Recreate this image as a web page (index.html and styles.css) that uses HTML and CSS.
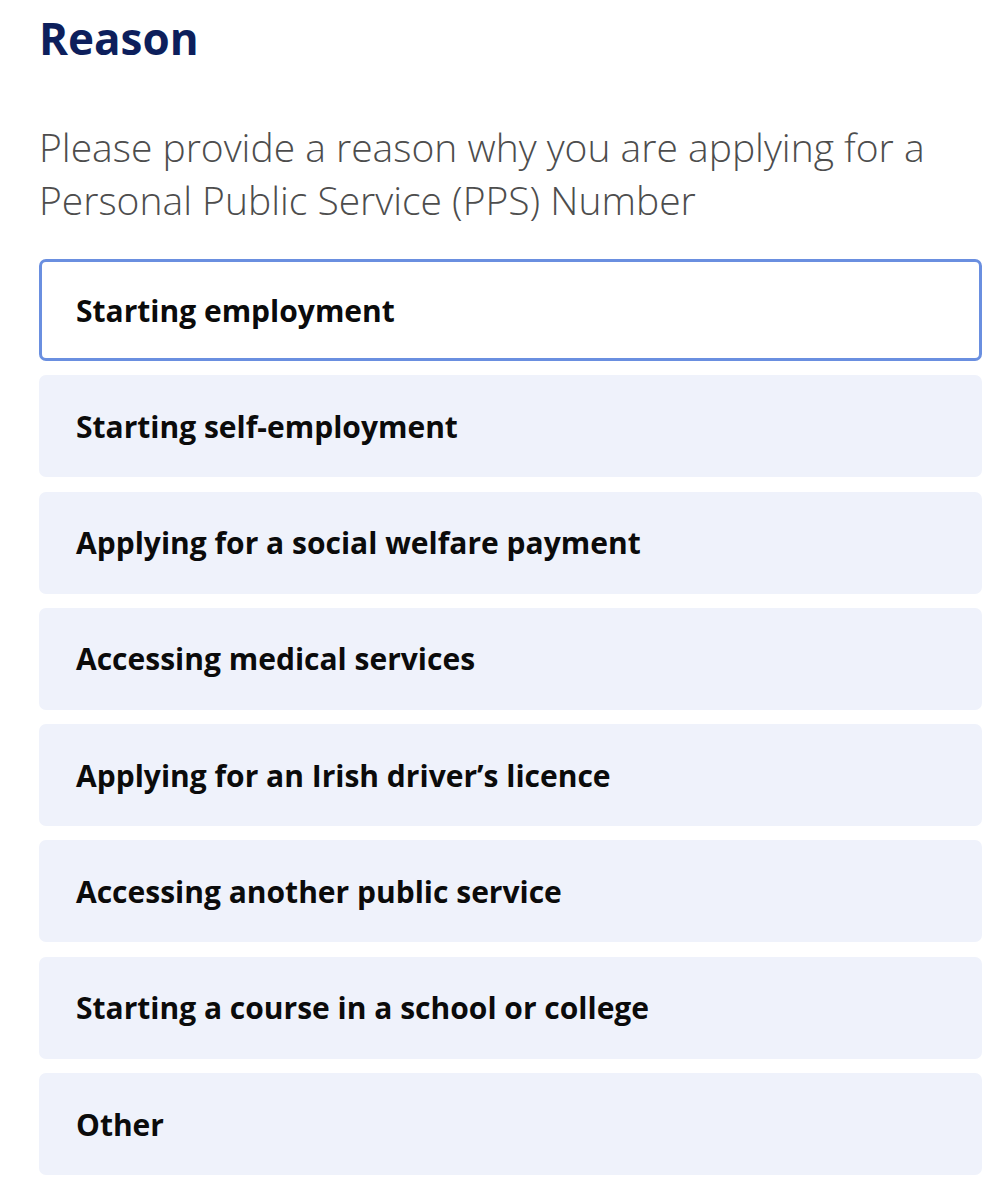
FILE: index.html
```html
<!DOCTYPE html>
<html lang="en">
<head>
<meta charset="utf-8">
<title>Reason</title>
<link rel="stylesheet" href="styles.css">
</head>
<body>
<main class="page">
  <h1 class="title">Reason</h1>
  <p class="lead">Please provide a reason why you are applying for a Personal Public Service (PPS) Number</p>
  <ul class="options">
    <li class="option option-active">Starting employment</li>
    <li class="option">Starting self-employment</li>
    <li class="option">Applying for a social welfare payment</li>
    <li class="option">Accessing medical services</li>
    <li class="option">Applying for an Irish driver’s licence</li>
    <li class="option">Accessing another public service</li>
    <li class="option">Starting a course in a school or college</li>
    <li class="option">Other</li>
  </ul>
</main>
</body>
</html>
```
FILE: styles.css
```css
html, body {
  margin: 0;
  padding: 0;
  background: #ffffff;
}
.page {
  padding: 0 17px 0 39px;
  width: 943px;
}
.title {
  margin: 0;
  padding-top: 10px;
  font-family: "Open Sans", "Noto Sans", sans-serif;
  font-weight: 700;
  font-size: 44px;
  line-height: 56px;
  color: #0d1f5c;
}
.lead {
  margin: 54px 0 0 0;
  font-family: "Open Sans", "Noto Sans", sans-serif;
  font-weight: 300;
  font-size: 39px;
  line-height: 53px;
  color: #4d4d4d;
}
.options {
  list-style: none;
  margin: 33px 0 0 0;
  padding: 0;
  display: flex;
  flex-direction: column;
  gap: 14.3px;
}
.option {
  box-sizing: border-box;
  height: 102px;
  display: flex;
  align-items: center;
  padding: 0 34px;
  border: 3px solid transparent;
  border-radius: 7px;
  background: #eff2fb;
  font-family: "Open Sans", "Noto Sans", sans-serif;
  font-weight: 700;
  font-size: 30px;
  color: #0b0b0b;
}
.option-active {
  background: #ffffff;
  border-color: #6a8fe0;
}
```
